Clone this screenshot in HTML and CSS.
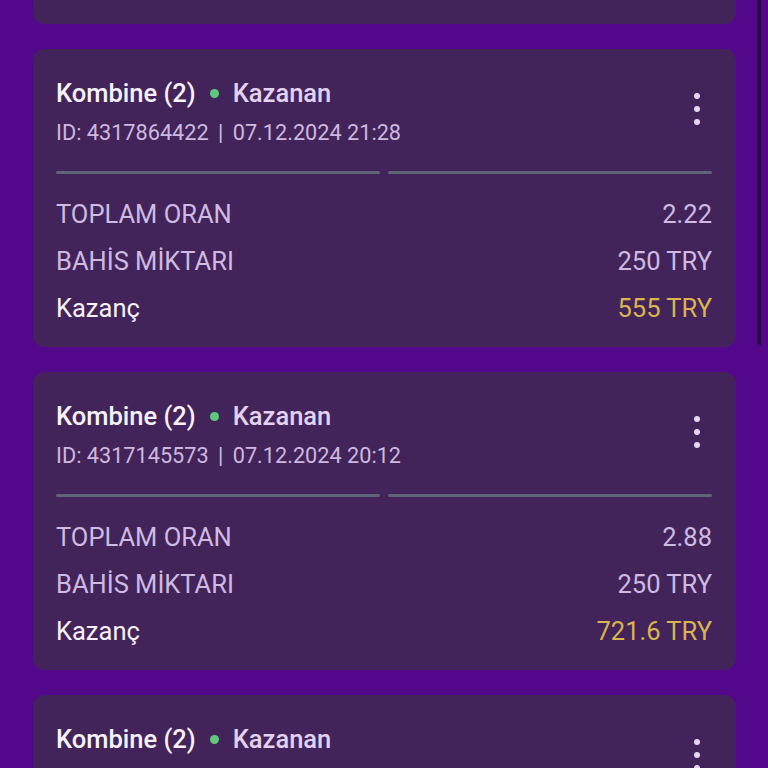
FILE: index.html
```html
<!DOCTYPE html>
<html>
<head>
	<title>Bahis Geçmişi</title>
	<meta charset="utf-8">
	<meta name="viewport" content="width=device-width, initial-scale=1">
	<link rel="stylesheet" href="styles.css">
</head>
<body>
	<div class="scroll-thumb"></div>
	<div class="list">

		<!-- previous bet, scrolled almost out of view -->
		<div class="bet bet-prev"></div>

		<div class="bet">
			<div class="bet-head">
				<div class="bet-info">
					<div class="bet-title">Kombine (2) <span class="dot"></span> <span class="status">Kazanan</span></div>
					<div class="bet-meta">ID: 4317864422 <span class="sep">|</span> 07.12.2024 21:28</div>
				</div>
				<div class="kebab"><span></span><span></span><span></span></div>
			</div>
			<div class="bars"><div></div><div></div></div>
			<div class="rows">
				<div class="row"><span>TOPLAM ORAN</span><span>2.22</span></div>
				<div class="row"><span>BAHİS MİKTARI</span><span>250 TRY</span></div>
				<div class="row win"><span>Kazanç</span><span class="gold">555 TRY</span></div>
			</div>
		</div>

		<div class="bet">
			<div class="bet-head">
				<div class="bet-info">
					<div class="bet-title">Kombine (2) <span class="dot"></span> <span class="status">Kazanan</span></div>
					<div class="bet-meta">ID: 4317145573 <span class="sep">|</span> 07.12.2024 20:12</div>
				</div>
				<div class="kebab"><span></span><span></span><span></span></div>
			</div>
			<div class="bars"><div></div><div></div></div>
			<div class="rows">
				<div class="row"><span>TOPLAM ORAN</span><span>2.88</span></div>
				<div class="row"><span>BAHİS MİKTARI</span><span>250 TRY</span></div>
				<div class="row win"><span>Kazanç</span><span class="gold">721.6 TRY</span></div>
			</div>
		</div>

		<div class="bet">
			<div class="bet-head">
				<div class="bet-info">
					<div class="bet-title">Kombine (2) <span class="dot"></span> <span class="status">Kazanan</span></div>
				</div>
				<div class="kebab"><span></span><span></span><span></span></div>
			</div>
		</div>

	</div>
</body>
</html>
```

FILE: styles.css
```css
body {
	margin: 0;
	background-color: #53078b;
	font-family: Roboto, "Noto Sans", sans-serif;
	overflow: hidden;
}

.list {
	display: flex;
	flex-direction: column;
	gap: 25px;
	padding: 0 32px 0 33px;
}

.bet {
	background-color: #42245a;
	border-radius: 12px;
	padding: 28px 24px 16px 23px;
}

.bet-prev {
	height: 24px;
	padding: 0;
	border-radius: 0 0 12px 12px;
}

.bet-head {
	display: flex;
	justify-content: space-between;
}

.bet-title {
	display: flex;
	align-items: center;
	gap: 14px;
	font-size: 25.5px;
	font-weight: 500;
	line-height: 32px;
	color: #f6f1fb;
}

.dot {
	width: 9px;
	height: 9px;
	border-radius: 50%;
	background-color: #5fc87c;
}

.status {
	color: #e3d2f1;
}

.bet-meta {
	margin-top: 10px;
	font-size: 21.7px;
	line-height: 28px;
	color: #cdb9df;
}

.sep {
	margin: 0 4px;
}

.kebab {
	display: flex;
	flex-direction: column;
	align-items: center;
	gap: 7px;
	width: 24px;
	margin: 16px 3px 0 0;
}

.kebab span {
	width: 6px;
	height: 6px;
	border-radius: 50%;
	background-color: #e6d6f3;
}

.bars {
	display: flex;
	gap: 8px;
	margin-top: 24px;
}

.bars div {
	flex: 1;
	height: 3px;
	border-radius: 2px;
	background-color: #5f6577;
}

.rows {
	padding-top: 16px;
}

.row {
	display: flex;
	justify-content: space-between;
	align-items: center;
	height: 47px;
	font-size: 25.5px;
	color: #cfbbe1;
}

.row.win {
	color: #f6f1fb;
}

.gold {
	color: #d9b44f;
}

.scroll-thumb {
	position: absolute;
	top: 0;
	right: 7px;
	width: 4px;
	height: 345px;
	background-color: #2b0a47;
}
```
